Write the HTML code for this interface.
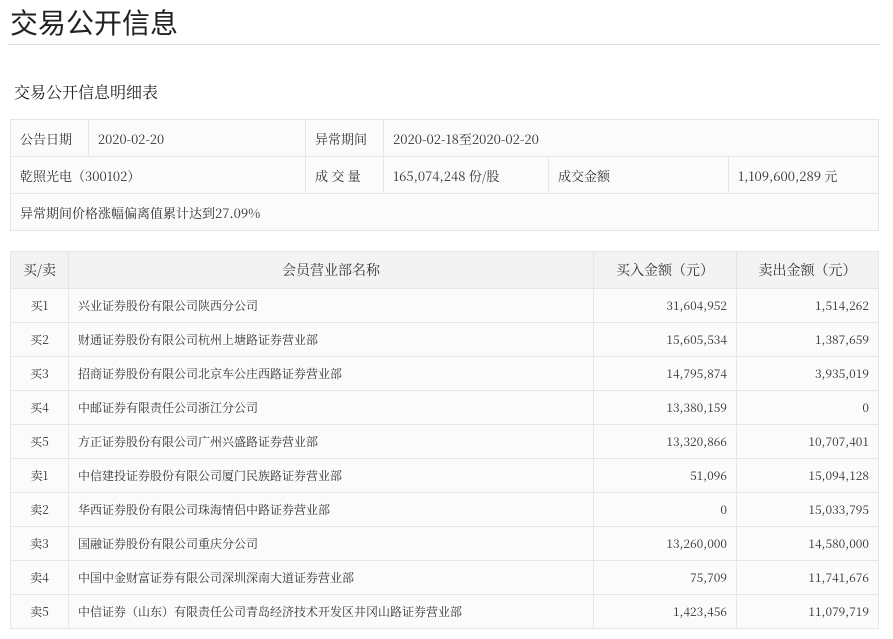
<!DOCTYPE html>
<html><head><meta charset="utf-8">
<style>
body{margin:0;background:#fff;color:#333;font-family:"Liberation Sans","Noto Serif CJK SC",serif;}
h1{position:absolute;left:10px;top:0;margin:0;font-weight:normal;font-size:28px;line-height:44px;color:#222;font-family:"Noto Sans CJK SC",sans-serif;}
.hr{position:absolute;left:8px;top:44px;width:872px;height:1px;background:#ddd;}
h2{position:absolute;left:14px;top:80px;margin:0;font-weight:normal;font-size:16px;line-height:24px;color:#222;font-family:"Noto Serif CJK SC",serif;}
table{position:absolute;left:10px;border-collapse:collapse;table-layout:fixed;font-family:"Noto Serif CJK SC",serif;font-size:13px;}
td{border:1px solid #e6e6e6;background:#fbfbfb;padding:0 9px;white-space:nowrap;overflow:hidden;}
#t1{top:119px;width:868px;}
#t1 td{height:36px;}
#t2{top:251px;width:868px;}
#t2 td{height:33px;font-size:12px;}
#t2 tr.h td{height:36px;background:#f3f3f3;text-align:center;font-size:14px;}
.c{text-align:center}.r{text-align:right}
</style></head><body>
<h1>交易公开信息</h1>
<div class="hr"></div>
<h2>交易公开信息明细表</h2>
<table id="t1">
<colgroup><col style="width:78px"><col style="width:217px"><col style="width:78px"><col style="width:165px"><col style="width:180px"><col style="width:150px"></colgroup>
<tr><td>公告日期</td><td>2020-02-20</td><td>异常期间</td><td colspan="3">2020-02-18至2020-02-20</td></tr>
<tr><td colspan="2">乾照光电（300102）</td><td>成 交 量</td><td>165,074,248 份/股</td><td>成交金额</td><td>1,109,600,289 元</td></tr>
<tr><td colspan="6">异常期间价格涨幅偏离值累计达到27.09%</td></tr>
</table>
<table id="t2">
<colgroup><col style="width:58px"><col style="width:525px"><col style="width:143px"><col style="width:142px"></colgroup>
<tr class="h"><td>买/卖</td><td>会员营业部名称</td><td>买入金额（元）</td><td>卖出金额（元）</td></tr>
<tr><td class="c">买1</td><td>兴业证券股份有限公司陕西分公司</td><td class="r">31,604,952</td><td class="r">1,514,262</td></tr>
<tr><td class="c">买2</td><td>财通证券股份有限公司杭州上塘路证券营业部</td><td class="r">15,605,534</td><td class="r">1,387,659</td></tr>
<tr><td class="c">买3</td><td>招商证券股份有限公司北京车公庄西路证券营业部</td><td class="r">14,795,874</td><td class="r">3,935,019</td></tr>
<tr><td class="c">买4</td><td>中邮证券有限责任公司浙江分公司</td><td class="r">13,380,159</td><td class="r">0</td></tr>
<tr><td class="c">买5</td><td>方正证券股份有限公司广州兴盛路证券营业部</td><td class="r">13,320,866</td><td class="r">10,707,401</td></tr>
<tr><td class="c">卖1</td><td>中信建投证券股份有限公司厦门民族路证券营业部</td><td class="r">51,096</td><td class="r">15,094,128</td></tr>
<tr><td class="c">卖2</td><td>华西证券股份有限公司珠海情侣中路证券营业部</td><td class="r">0</td><td class="r">15,033,795</td></tr>
<tr><td class="c">卖3</td><td>国融证券股份有限公司重庆分公司</td><td class="r">13,260,000</td><td class="r">14,580,000</td></tr>
<tr><td class="c">卖4</td><td>中国中金财富证券有限公司深圳深南大道证券营业部</td><td class="r">75,709</td><td class="r">11,741,676</td></tr>
<tr><td class="c">卖5</td><td>中信证券（山东）有限责任公司青岛经济技术开发区井冈山路证券营业部</td><td class="r">1,423,456</td><td class="r">11,079,719</td></tr>
</table>
</body></html>
